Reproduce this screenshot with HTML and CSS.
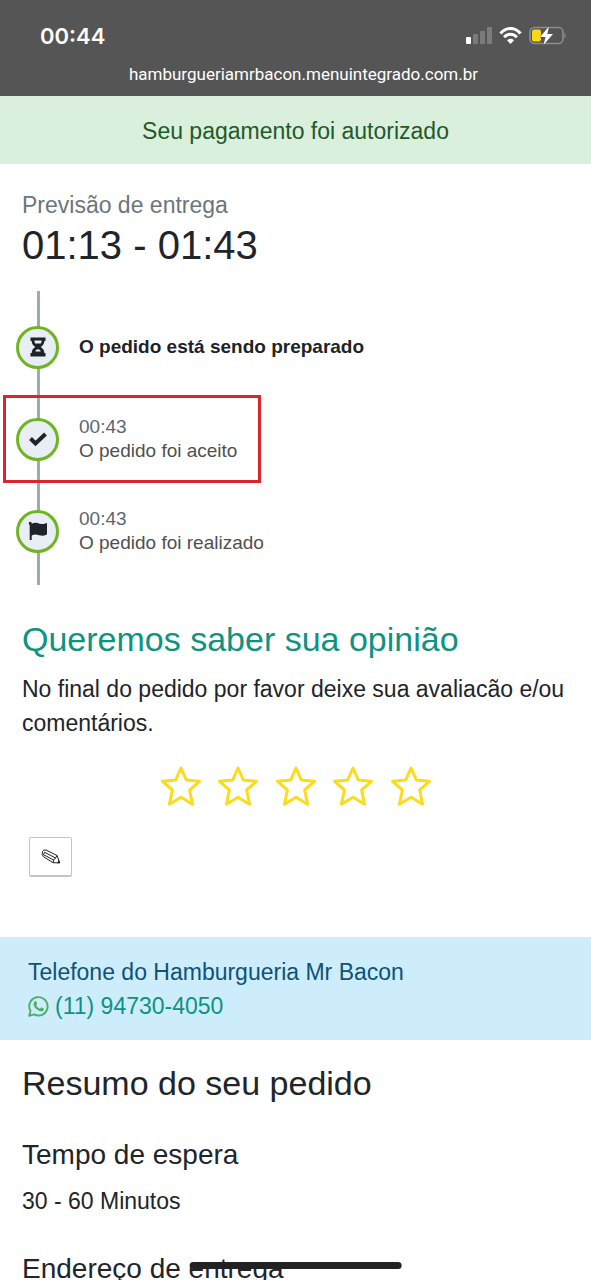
FILE: index.html
```html
<!DOCTYPE html>
<html lang="pt-BR">
<head>
<meta charset="utf-8">
<meta name="viewport" content="width=device-width, initial-scale=1">
<title>Acompanhe seu pedido</title>
<link rel="stylesheet" href="styles.css">
</head>
<body>
<div class="screen">
  <header class="phone-bar">
    <div class="status">
      <span class="clock">00:44</span>
      <svg class="status-icons" width="102" height="20" viewBox="0 0 102 20" aria-hidden="true">
        <rect x="1" y="11" width="5" height="7" rx="1" fill="#fff"/>
        <g fill="#7b7b7b"><rect x="8" y="8" width="5" height="10" rx="1"/><rect x="15" y="5" width="5" height="13" rx="1"/><rect x="22" y="1" width="5" height="17" rx="1"/></g>
        <g fill="none" stroke="#fff" stroke-width="3"><path d="M35.500 7.500 C41 0.800 50 0.800 55.500 7.500"/><path d="M39.200 11.200 C42.500 7.200 48.500 7.200 51.800 11.200"/></g>
        <path d="M45.500 18 L42 14.200 C44 12.400 47 12.400 49 14.200 Z" fill="#fff"/>
        <rect x="65" y="1.500" width="33" height="16" rx="4.500" fill="none" stroke="#8d8d8d" stroke-width="1.600"/>
        <path d="M99.500 6.500 Q102 9.500 99.500 12.500 Z" fill="#8d8d8d"/>
        <rect x="67" y="3.500" width="9" height="12" rx="2" fill="#fcd815"/>
        <path d="M84 0.500 L75 11 H80.500 L78.500 19 L88 8 H82.300 Z" fill="#fff" stroke="#555" stroke-width="1" paint-order="stroke"/>
      </svg>
    </div>
    <div class="address">hamburgueriamrbacon.menuintegrado.com.br</div>
  </header>

  <div class="alert" role="status">Seu pagamento foi autorizado</div>

  <main>
    <section class="forecast">
      <p class="forecast-label">Previsão de entrega</p>
      <p class="forecast-time">01:13 - 01:43</p>
    </section>

    <ol class="timeline">
      <li class="step step-current">
        <span class="badge">
          <svg width="16" height="20" viewBox="0 0 16 20" aria-hidden="true"><path d="M.5 .5h15v3.500h-1.200c0 2.800-1.400 4.600-3.500 6 2.100 1.400 3.500 3.200 3.500 6h1.200v3.500H.5V16h1.200c0-2.800 1.400-4.600 3.500-6-2.100-1.400-3.500-3.200-3.500-6H.5z" fill="#1d2329"/><path d="M4.400 3.500h7.200c0 1.200-.3 2.200-.8 3H5.200c-.5-.8-.8-1.800-.8-3zM5.200 14.500c.6-1.400 1.600-2.300 2.800-2.300s2.200.9 2.800 2.300z" fill="#e8eef4"/></svg>
        </span>
        <div class="step-text">O pedido está sendo preparado</div>
      </li>
      <li class="step step-marked">
        <span class="badge">
          <svg width="20" height="16" viewBox="0 0 20 16" aria-hidden="true"><path d="M2.500 7.500l5 5L17.500 3" fill="none" stroke="#1d2329" stroke-width="4"/></svg>
        </span>
        <div class="step-text"><time>00:43</time><br>O pedido foi aceito</div>
      </li>
      <li class="step">
        <span class="badge">
          <svg width="20" height="20" viewBox="0 0 20 20" aria-hidden="true"><path d="M2 .8a1.700 1.700 0 0 1 1.700 2C7 1.200 9.400 2 11.600 2.700c2.200.7 4 .5 6.200-.5.700-.3 1.200 0 1.200.7v9.800c0 .5-.2.800-.6 1-2.600 1.300-4.800 1.300-7.200.6-2.600-.8-4.700-1.200-7.500.1V19H1.700V4A1.700 1.700 0 0 1 2 .8z" fill="#1d2329"/></svg>
        </span>
        <div class="step-text"><time>00:43</time><br>O pedido foi realizado</div>
      </li>
    </ol>

    <section class="opinion">
      <h1>Queremos saber sua opinião</h1>
      <p>No final do pedido por favor deixe sua avaliacão e/ou comentários.</p>
      <div class="stars">
        <button class="star" aria-label="1 estrela"><svg viewBox="0 0 42 42"><path d="M21 3l5.300 12 13.200 1.300-9.900 8.700 3 14.200L21 32.300 9.400 39.200l3-14.200-9.900-8.700L15.700 15z"/></svg></button>
        <button class="star" aria-label="2 estrelas"><svg viewBox="0 0 42 42"><path d="M21 3l5.300 12 13.200 1.300-9.900 8.700 3 14.200L21 32.300 9.400 39.200l3-14.200-9.900-8.700L15.700 15z"/></svg></button>
        <button class="star" aria-label="3 estrelas"><svg viewBox="0 0 42 42"><path d="M21 3l5.300 12 13.200 1.300-9.900 8.700 3 14.200L21 32.300 9.400 39.200l3-14.200-9.900-8.700L15.700 15z"/></svg></button>
        <button class="star" aria-label="4 estrelas"><svg viewBox="0 0 42 42"><path d="M21 3l5.300 12 13.200 1.300-9.900 8.700 3 14.200L21 32.300 9.400 39.200l3-14.200-9.900-8.700L15.700 15z"/></svg></button>
        <button class="star" aria-label="5 estrelas"><svg viewBox="0 0 42 42"><path d="M21 3l5.300 12 13.200 1.300-9.900 8.700 3 14.200L21 32.300 9.400 39.200l3-14.200-9.900-8.700L15.700 15z"/></svg></button>
      </div>
      <button class="edit" aria-label="Escrever comentário">
        <svg width="20" height="16" viewBox="0 0 20 16" aria-hidden="true"><g fill="none" stroke="#222" stroke-width="1" stroke-linejoin="round"><path d="M1.500 2.500Q2.500.5 5 1l11 5.500 2.800 7.500-6.600-.3L2.500 7.800Q.3 5.500 1.500 2.500z"/><path d="M3.500 3.200l11 5.800M2.500 5.700l10.200 5.300M16 6.500l-1.500 2.500-1.800 2-.5 2.700"/><path d="M3.500 3.200l-1 2.500"/></g><path d="M18.900 14l-.9-3-2 2.900z" fill="#222"/></svg>
      </button>
    </section>

    <section class="contact">
      <div>Telefone do Hamburgueria Mr Bacon</div>
      <a href="tel:+5511947304050">
        <svg width="21" height="21" viewBox="0 0 21 21" aria-hidden="true"><path d="M1.200 19.800l1.300-4.900a9.200 9.200 0 1 1 3.600 3.500z" fill="none" stroke="#4fae64" stroke-width="1.900" stroke-linejoin="round"/><path d="M6.700 5.500c.5-.6 1.300-.5 1.600.2l.8 1.900c.2.500-.6 1.200-.9 1.600.9 1.700 2.200 2.800 3.900 3.500.5-.5 1-1.500 1.500-1.300l2 1c.7.400.1 1.900-.6 2.400-1.700 1.200-4.300.1-6.300-1.500-2.300-1.900-4.500-5-2-7.800z" fill="#4fae64"/></svg>
        <span>(11) 94730-4050</span>
      </a>
    </section>

    <section class="summary">
      <h2>Resumo do seu pedido</h2>
      <h3>Tempo de espera</h3>
      <p>30 - 60 Minutos</p>
      <h3>Endereço de entrega</h3>
    </section>
  </main>
  <div class="home-indicator"></div>
</div>
</body>
</html>
```
FILE: styles.css
```css
* { box-sizing: border-box; }

body {
  margin: 0;
  background: #fff;
  color: #212529;
  font-family: "Liberation Sans", Arial, sans-serif;
  font-size: 23px;
  line-height: 34px;
}

p, h1, h2, h3, ol { margin: 0; padding: 0; font-weight: 400; }

button { padding: 0; font: inherit; cursor: pointer; }

.screen {
  position: relative;
  height: 100vh;
  overflow: hidden;
}

.phone-bar {
  padding: 20px 24px 10px 40px;
  background: #555;
  color: #fff;
}

.status {
  display: flex;
  justify-content: space-between;
  align-items: center;
  height: 32px;
}

.clock {
  font-family: Inter, sans-serif;
  font-size: 22px;
  font-weight: 600;
}

.address {
  margin-top: 10px;
  font-family: Roboto, sans-serif;
  font-size: 17px;
  line-height: 24px;
  text-align: center;
}

.alert {
  padding: 18px 22px 16px;
  background: #daefdc;
  color: #1f5a2a;
  text-align: center;
}

.forecast { padding: 24px 22px 0; }
.forecast-label { color: #6c757d; }
.forecast-time { font-size: 40px; line-height: 46px; }

.timeline {
  margin: 23px 0 0 16px;
  padding: 8px 0 6px;
  list-style: none;
  background: linear-gradient(#9aabb1, #9aabb1) 21px 0 / 3px 100% no-repeat;
}

.step {
  display: flex;
  align-items: center;
  gap: 20px;
  height: 96px;
  font-size: 19px;
  line-height: 24px;
  color: #505050;
}

.step-current { color: #1d2329; font-weight: 700; }

.step-marked {
  width: 258px;
  height: 88px;
  margin-left: -13px;
  padding-left: 10px;
  border: 3px solid #d9262c;
}

.badge {
  display: flex;
  flex: none;
  align-items: center;
  justify-content: center;
  width: 43px;
  height: 43px;
  border: 3px solid #6fb522;
  border-radius: 50%;
  background: #e8eef4;
}

.step time { color: #5a6672; }

.opinion { padding: 34px 22px 60px; }
.opinion h1 { color: #0d9380; font-size: 34px; line-height: 40px; }
.opinion p { margin-top: 13px; }

.stars {
  display: flex;
  justify-content: space-between;
  max-width: 272px;
  margin: 25px auto 0;
}

.star {
  width: 42px;
  height: 42px;
  border: 0;
  background: none;
}

.star svg {
  display: block;
  fill: none;
  stroke: #fbdc1c;
  stroke-width: 3;
  stroke-linejoin: round;
}

.edit {
  display: flex;
  align-items: center;
  justify-content: center;
  width: 43px;
  height: 40px;
  margin: 30px 0 0 7px;
  border: 1px solid #c4c4c4;
  border-bottom-width: 2px;
  border-radius: 2px;
  background: #fff;
}

.contact {
  padding: 18px 28px 17px;
  background: #cdedfd;
  color: #0f5276;
}

.contact a {
  display: flex;
  align-items: center;
  gap: 6px;
  color: #0d9380;
  text-decoration: none;
}

.summary { padding: 22px 22px 0; }
.summary h2 { font-size: 34px; line-height: 42px; }
.summary h3 { margin-top: 34px; font-size: 28px; }
.summary p { margin-top: 12px; }

.home-indicator {
  position: absolute;
  bottom: 11px;
  left: 50%;
  width: 36%;
  height: 7px;
  border-radius: 4px;
  background: #222;
  transform: translateX(-50%);
}
```
